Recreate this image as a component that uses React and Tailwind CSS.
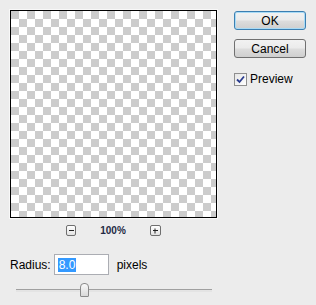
const checker =
  'bg-[conic-gradient(#ffffff_25%,#cccccc_0_50%,#ffffff_0_75%,#cccccc_0)] bg-size-[16px_16px]'

function DialogButton({ label, primary }) {
  return (
    <button
      className={`flex h-[19px] w-[72px] items-center justify-center rounded-[3px] border bg-[linear-gradient(180deg,#f2f2f2_0%,#ebebeb_48%,#dddddd_52%,#cfcfcf_100%)] text-[12px] leading-none text-black ${
        primary ? 'border-[#3c7fb1] shadow-[inset_0_0_0_1px_#a9dbf6]' : 'border-[#707070]'
      }`}
    >
      {label}
    </button>
  )
}

export default function App() {
  return (
    <div className="flex h-[305px] w-[316px] bg-[#ececec] font-['Liberation_Sans',Arial,sans-serif] text-[12px] text-black">
      <div className="flex w-[234px] flex-col pt-[10px]">
        <div className="ml-[10px] h-[208px] w-[207px] border border-black outline outline-[#f8f8f8]">
          <div className={`h-full w-full ${checker}`} />
        </div>

        <div className="mt-[5px] flex w-[227px] items-center justify-center">
          <button className="flex h-[11px] w-[10px] items-center justify-center rounded-[2px] border border-[#6f6f6f] bg-[linear-gradient(180deg,#ffffff_0%,#e2e2e2_100%)]">
            <span className="block h-px w-[5px] bg-[#222]" />
          </button>
          <span className="mx-[24px] text-[10px] font-bold text-[#1f2a44]">100%</span>
          <button className="relative flex h-[11px] w-[11px] items-center justify-center rounded-[2px] border border-[#6f6f6f] bg-[linear-gradient(180deg,#ffffff_0%,#e2e2e2_100%)]">
            <span className="block h-px w-[5px] bg-[#222]" />
            <span className="absolute left-1/2 top-1/2 block h-[5px] w-px -translate-x-1/2 -translate-y-1/2 bg-[#222]" />
          </button>
        </div>

        <div className="mt-[16px] flex items-center pl-[10px]">
          <span>Radius:</span>
          <div className="ml-[3px] flex h-[21px] w-[55px] items-center border border-[#abadb3] bg-white pl-[3px]">
            <span className="bg-[#3399ff] px-px text-[12px] leading-[14px] text-white">8.0</span>
          </div>
          <span className="ml-[8px]">pixels</span>
        </div>

        <div className="relative ml-[16px] mt-[8px] h-[14px] w-[196px]">
          <div className="absolute left-0 right-0 top-[6px] h-[3px] border-t border-[#a0a0a0] border-b-white bg-[#e4e4e4]" />
          <div className="absolute left-[64px] top-0 h-[14px] w-[9px] rounded-t-[4px] rounded-b-[1px] border border-[#8a8a8a] bg-[linear-gradient(180deg,#fafafa,#d9d9d9)]" />
        </div>
      </div>

      <div className="flex flex-col pt-[11px]">
        <DialogButton label="OK" primary />
        <div className="mt-[9px]">
          <DialogButton label="Cancel" />
        </div>
        <label className="mt-[12px] flex items-center">
          <span className="flex h-[13px] w-[13px] items-center justify-center border border-[#8f8f8f] bg-[linear-gradient(135deg,#e6e6e6,#ffffff)]">
            <svg width="9" height="9" viewBox="0 0 9 9">
              <path d="M1 4.5 L3.5 7 L8 1.5" fill="none" stroke="#2a3c8e" strokeWidth="1.8" />
            </svg>
          </span>
          <span className="ml-[3px]">Preview</span>
        </label>
      </div>
    </div>
  )
}
